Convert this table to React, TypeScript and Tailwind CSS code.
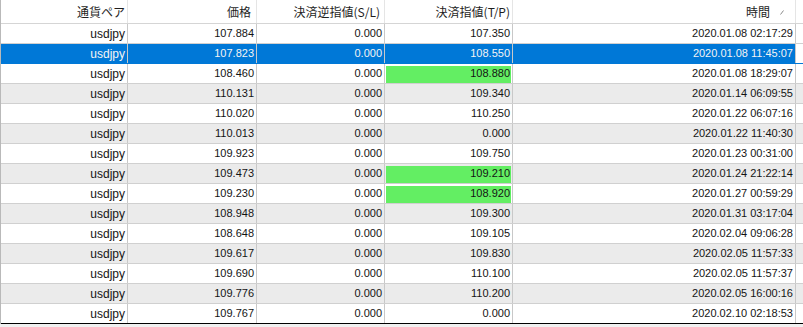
import React from "react";

type Row = { p: string; sl: string; tp: string; t: string; green?: boolean };

const rows: Row[] = [
  { p: "107.884", sl: "0.000", tp: "107.350", t: "2020.01.08 02:17:29" },
  { p: "107.823", sl: "0.000", tp: "108.550", t: "2020.01.08 11:45:07" },
  { p: "108.460", sl: "0.000", tp: "108.880", t: "2020.01.08 18:29:07", green: true },
  { p: "110.131", sl: "0.000", tp: "109.340", t: "2020.01.14 06:09:55" },
  { p: "110.020", sl: "0.000", tp: "110.250", t: "2020.01.22 06:07:16" },
  { p: "110.013", sl: "0.000", tp: "0.000", t: "2020.01.22 11:40:30" },
  { p: "109.923", sl: "0.000", tp: "109.750", t: "2020.01.23 00:31:00" },
  { p: "109.473", sl: "0.000", tp: "109.210", t: "2020.01.24 21:22:14", green: true },
  { p: "109.230", sl: "0.000", tp: "108.920", t: "2020.01.27 00:59:29", green: true },
  { p: "108.948", sl: "0.000", tp: "109.300", t: "2020.01.31 03:17:04" },
  { p: "108.648", sl: "0.000", tp: "109.105", t: "2020.02.04 09:06:28" },
  { p: "109.617", sl: "0.000", tp: "109.830", t: "2020.02.05 11:57:33" },
  { p: "109.690", sl: "0.000", tp: "110.100", t: "2020.02.05 11:57:37" },
  { p: "109.776", sl: "0.000", tp: "110.200", t: "2020.02.05 16:00:16" },
  { p: "109.767", sl: "0.000", tp: "0.000", t: "2020.02.10 02:18:53" },
];

const grid = "grid grid-cols-[127px_129px_128px_128px_283px_1fr]";

export default function App() {
  return (
    <div
      className="w-[803px] h-[327px] bg-[#f0f0f0] overflow-hidden"
      style={{ fontFamily: '"Liberation Sans", Arial, sans-serif' }}
    >
      <div className="border-l border-[#b9b9b9] bg-white">
        {/* header */}
        <div
          className={`${grid} h-[24px] border-b border-[#d5d5d5] text-[12px] text-[#1e1e1e]`}
          style={{ fontFamily: '"Noto Sans CJK JP", "Liberation Sans", sans-serif' }}
        >
          <div className="flex items-center justify-end pr-[2px] border-r border-[#e5e5e5]">通貨ペア</div>
          <div className="flex items-center justify-end pr-[5px] border-r border-[#e5e5e5]">価格</div>
          <div className="flex items-center justify-end pr-[4px] border-r border-[#e5e5e5]">決済逆指値(S/L)</div>
          <div className="flex items-center justify-end pr-[2px] border-r border-[#e5e5e5]">決済指値(T/P)</div>
          <div className="flex items-center justify-end pr-[11px] border-r border-[#e5e5e5]">
            <span>時間</span>
            <svg width="4" height="5" viewBox="0 0 4 5" className="ml-[10px] mt-[2px]">
              <line x1="0.5" y1="4.5" x2="3.5" y2="0.5" stroke="#8a8a8a" strokeWidth="1" />
            </svg>
          </div>
          <div />
        </div>
        {/* body */}
        {rows.map((r, i) => {
          const selected = i === 1;
          const last = i === rows.length - 1;
          const bg = selected ? "bg-[#0078d7]" : i % 2 === 1 ? "bg-[#ebebeb]" : "bg-white";
          const txt = selected ? "text-[#f4f4f4]" : "text-[#141414]";
          const bb = last ? "border-b border-[#000]" : selected ? "border-b border-[#0078d7]" : "border-b border-[#d0d0d0]";
          const cell = `flex items-center justify-end pr-[2px] border-r border-[#c8c8c8]`;
          return (
            <div key={i} className={`${grid} h-[20px] ${bb} ${txt} text-[11px]`}>
              <div className={`${cell} ${bg} text-[12px]`}>usdjpy</div>
              <div className={`${cell} ${bg}`}>{r.p}</div>
              <div className={`${cell} ${bg}`}>{r.sl}</div>
              <div className={`${cell} ${bg} relative`}>
                {r.green && <div className="absolute left-px right-px top-[2px] bottom-0 bg-[#63ee63]" />}
                <span className="relative">{r.tp}</span>
              </div>
              <div className={`${cell} ${bg}`}>{r.t}</div>
              <div className={selected ? "bg-white" : bg} />
            </div>
          );
        })}
      </div>
    </div>
  );
}
